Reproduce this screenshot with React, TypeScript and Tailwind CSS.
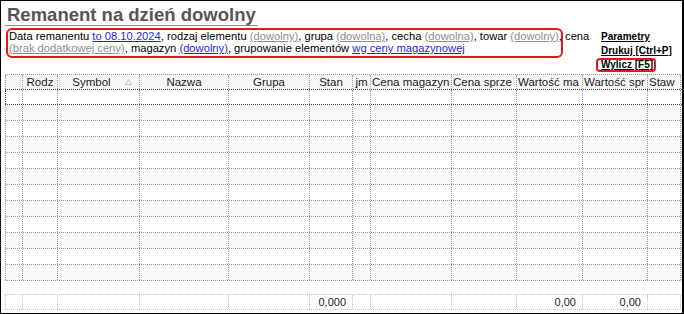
import React from "react";

const headers = ["", "Rodz", "Symbol", "Nazwa", "Grupa", "Stan", "jm", "Cena magazyn", "Cena sprze", "Wartość ma", "Wartość spr", "Staw"];
// columns whose header text does not fit and is drawn from the left
const clipped = [7, 8, 9, 10, 11];

const footer: Record<number, string> = { 5: "0,000", 9: "0,00", 10: "0,00" };

const gridCols = "grid grid-cols-[17px_35px_82px_89px_81px_43px_18px_81px_65px_66px_65px_34px]";

function Cell({ last, className = "", children }: { last: boolean; className?: string; children?: React.ReactNode }) {
  return (
    <div className={`h-full border-l border-dotted border-[#9a9a9a] overflow-hidden whitespace-nowrap ${last ? "border-r" : ""} ${className}`}>
      {children}
    </div>
  );
}

function SortArrow() {
  return (
    <svg width="7" height="6" viewBox="0 0 7 6" className="ml-auto mr-[7px] shrink-0">
      <path d="M0.5 5.5 L3.5 0.5 L6.5 5.5 Z" fill="none" stroke="#c8c8c8" strokeWidth="1" />
    </svg>
  );
}

export default function App() {
  const rows = Array.from({ length: 11 }, (_, i) => i);

  return (
    <div className="w-[684px] h-[314px] bg-white border border-black border-r-2 overflow-hidden font-['Liberation_Sans',Arial,sans-serif] text-black">
      {/* Top: title, filter box and actions */}
      <div className="flex items-start">
        <div className="w-[595px] pl-[4px] pt-[3px]">
          <div className="inline-block border-b border-[#8a8a8a] pl-[2px] pr-[2px] text-[18.5px] leading-[21px] font-bold text-[#555]">
            Remanent na dzień dowolny
          </div>
          <div className="ml-[1px] w-[557px] border-2 border-[#e3161b] rounded-[6px] pl-[1px] pb-[2px] text-[11.2px] leading-[12px] whitespace-nowrap">
            <div>
              Data remanentu <span className="text-[#1f1fe6] underline">to 08.10.2024</span>, rodzaj elementu{" "}
              <span className="text-[#8e8e8e] underline">(dowolny)</span>, grupa{" "}
              <span className="text-[#8e8e8e] underline">(dowolna)</span>, cecha{" "}
              <span className="text-[#8e8e8e] underline">(dowolna)</span>, towar{" "}
              <span className="text-[#8e8e8e] underline">(dowolny)</span>, cena
            </div>
            <div>
              <span className="text-[#8e8e8e] underline">(brak dodatkowej ceny)</span>, magazyn{" "}
              <span className="text-[#1f1fe6] underline">(dowolny)</span>, grupowanie elementów{" "}
              <span className="text-[#1f1fe6] underline">wg ceny magazynowej</span>
            </div>
          </div>
        </div>

        <div className="flex flex-col items-start pt-[28px] text-[10px] font-bold">
          <span className="pl-[5px] leading-[15px] underline">Parametry</span>
          <span className="pl-[5px] leading-[14px] underline">Drukuj [Ctrl+P]</span>
          <span className="border-2 border-[#e3161b] rounded-[4px] pl-[3px] pr-[1px] leading-[10px] underline">Wylicz [F5]</span>
        </div>
      </div>

      {/* Table */}
      <div className="ml-[4px] mt-[2px] text-[11.5px] text-[#1a1a1a]">
        <div className={`${gridCols} h-[15px] border-t border-dotted border-[#9a9a9a] bg-[#f7f7f7] leading-[14px]`}>
          {headers.map((h, i) => (
            <Cell
              key={i}
              last={i === headers.length - 1}
              className={`flex items-center ${clipped.includes(i) ? "justify-start pl-[1px]" : "justify-center"}`}
            >
              {i === 2 ? (
                <>
                  <span className="ml-auto">{h}</span>
                  <SortArrow />
                </>
              ) : (
                h
              )}
            </Cell>
          ))}
        </div>

        {/* focused first row */}
        <div className={`${gridCols} h-[15px] border-t border-dotted border-[#444] bg-white`}>
          {headers.map((_, i) => (
            <Cell key={i} last={i === headers.length - 1} className={i === 0 ? "border-[#444]" : ""} />
          ))}
        </div>

        {rows.map((r) => (
          <div
            key={r}
            className={`${gridCols} border-t border-dotted ${r === 0 ? "border-[#444]" : "border-[#9a9a9a]"} ${
              r === rows.length - 1 ? "h-[17px] border-b" : "h-[16px]"
            } ${r % 2 === 0 ? "bg-[#f9f9f9]" : "bg-white"}`}
          >
            {headers.map((_, i) => (
              <Cell key={i} last={i === headers.length - 1} />
            ))}
          </div>
        ))}

        {/* totals */}
        <div className={`${gridCols} mt-[13px] h-[16px] border-y border-dotted border-[#c4c4c4] text-[11px] leading-[14px] text-[#222]`}>
          {headers.map((_, i) => (
            <div
              key={i}
              className={`h-full border-l border-dotted border-[#c4c4c4] text-right pr-[6px] whitespace-nowrap ${
                i === headers.length - 1 ? "border-r" : ""
              }`}
            >
              {footer[i] ?? ""}
            </div>
          ))}
        </div>
      </div>
    </div>
  );
}
